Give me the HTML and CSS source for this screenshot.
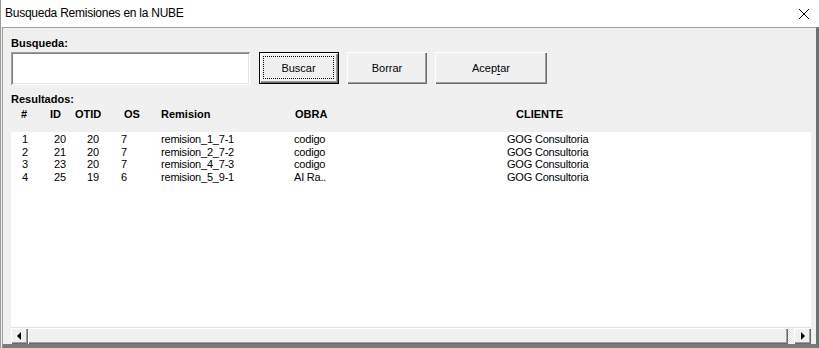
FILE: index.html
```html
<!DOCTYPE html>
<html lang="es">
<head>
  <meta charset="UTF-8" />
  <meta name="viewport" content="width=device-width, initial-scale=1.0"/>
  <title>Busqueda Remisiones en la NUBE</title>
  <link rel="stylesheet" href="styles.css">
</head>
<body>

  <div class="window">
    <div class="titlebar">
      <span class="title">Busqueda Remisiones en la NUBE</span>
      <svg class="close" width="12" height="12" viewBox="0 0 12 12">
        <path d="M1 1 L11 11 M11 1 L1 11" stroke="#000" stroke-width="1" fill="none"/>
      </svg>
    </div>

    <div class="client">
      <div class="label">Busqueda:</div>
      <div class="search-row">
        <input type="text" class="search-box" />
        <button class="btn default"><span class="focus">Buscar</span></button>
        <button class="btn">Borrar</button>
        <button class="btn wide">Acep<u>t</u>ar</button>
      </div>

      <div class="label results">Resultados:</div>
      <div class="cols head">
        <span>#</span><span>ID</span><span>OTID</span><span>OS</span><span>Remision</span><span>OBRA</span><span>CLIENTE</span>
      </div>

      <div class="listbox">
        <div class="rows" id="rows"></div>
        <div class="hscroll">
          <div class="sb-btn"><span class="arrow left"></span></div>
          <div class="thumb"></div>
          <div class="track"></div>
          <div class="sb-btn"><span class="arrow right"></span></div>
        </div>
      </div>
    </div>
  </div>

  <script>
    const remisiones = [
      { n: 1, id: 20, otid: 20, os: 7, remision: "remision_1_7-1", obra: "codigo", cliente: "GOG Consultoria" },
      { n: 2, id: 21, otid: 20, os: 7, remision: "remision_2_7-2", obra: "codigo", cliente: "GOG Consultoria" },
      { n: 3, id: 23, otid: 20, os: 7, remision: "remision_4_7-3", obra: "codigo", cliente: "GOG Consultoria" },
      { n: 4, id: 25, otid: 19, os: 6, remision: "remision_5_9-1", obra: "AI Ra..", cliente: "GOG Consultoria" },
    ];

    function renderRows() {
      const rows = document.getElementById("rows");
      remisiones.forEach(r => {
        const div = document.createElement("div");
        div.className = "cols row";
        div.innerHTML = `
          <span>${r.n}</span><span>${r.id}</span><span>${r.otid}</span><span>${r.os}</span>
          <span>${r.remision}</span><span>${r.obra}</span><span>${r.cliente}</span>
        `;
        rows.appendChild(div);
      });
    }

    renderRows();
  </script>

</body>
</html>
```

FILE: styles.css
```css
body {
  margin: 0;
  padding: 0;
  background: #f0f0f0;
  font-family: "Liberation Sans", Arial, sans-serif;
  font-size: 11px;
  color: #000;
}

.window {
  width: 819px;
  height: 348px;
  box-sizing: border-box;
  border-left: 1px solid #9a9a9a;
  display: flex;
  flex-direction: column;
  overflow: hidden;
}

.titlebar {
  height: 27px;
  background: #fff;
  display: flex;
  align-items: center;
  justify-content: space-between;
  padding: 0 9px 0 4px;
  flex-shrink: 0;
}

.title {
  font-size: 12px;
  letter-spacing: -0.25px;
  margin-top: -1px;
}

.close {
  display: block;
  margin-top: 1px;
}

.client {
  flex: 1;
  margin-left: 1px;
  background: #f0f0f0;
  border-top: 1px solid #a0a0a0;
  border-left: 1px solid #a0a0a0;
  border-right: 3px solid #6f6f6f;
  border-bottom: 4px solid #7b7b7b;
  padding: 9px 0 0 8px;
  display: flex;
  flex-direction: column;
}

.label {
  font-weight: bold;
  line-height: 13px;
  height: 13px;
}

.search-row {
  display: flex;
  align-items: flex-start;
  margin-top: 2px;
  height: 33px;
}

.search-box {
  width: 239px;
  height: 33px;
  box-sizing: border-box;
  margin: 0 9px 0 0;
  padding: 0;
  border: none;
  background: #fff;
  box-shadow: inset 1px 1px #a0a0a0, inset -1px -1px #fff, inset 2px 2px #808080, inset -2px -2px #e3e3e3;
  outline: none;
}

.btn {
  width: 80px;
  height: 32px;
  box-sizing: border-box;
  margin: 0 8px 0 0;
  padding: 0;
  border: none;
  background: #f0f0f0;
  font-family: "Liberation Sans", Arial, sans-serif;
  font-size: 11px;
  color: #000;
  box-shadow: inset 1px 1px #fff, inset -1px -1px #696969, inset -2px -2px #a0a0a0;
  display: flex;
  align-items: center;
  justify-content: center;
}

.btn.wide {
  width: 112px;
}

.btn.default {
  border: 1px solid #000;
}

.btn .focus {
  flex: 1;
  align-self: stretch;
  margin: 3px 4px 4px 3px;
  border: 1px dotted #000;
  display: flex;
  align-items: center;
  justify-content: center;
}

.btn u {
  text-underline-offset: 2px;
}

.results {
  margin-top: 8px;
}

.cols {
  display: grid;
  line-height: 13px;
}

.head {
  margin-top: 2px;
  height: 24px;
  font-weight: bold;
  padding-left: 10px;
  grid-template-columns: 29px 25px 49px 37px 134px 221px auto;
  align-content: start;
}

.listbox {
  width: 800px;
  height: 212px;
  background: #fff;
  display: flex;
  flex-direction: column;
}

.rows {
  flex: 1;
  padding-top: 1px;
}

.row {
  line-height: 12.5px;
  padding-left: 11px;
  letter-spacing: -0.2px;
  grid-template-columns: 32px 33px 34px 40px 133px 213px auto;
}

.hscroll {
  height: 17px;
  display: flex;
  background: #f0f0f0;
  border-top: 1px solid #e3e3e3;
  box-sizing: border-box;
}

.sb-btn, .thumb {
  box-sizing: border-box;
  background: #f0f0f0;
  box-shadow: inset 1px 1px #fff, inset -1px -1px #696969, inset -2px -2px #a0a0a0;
}

.sb-btn {
  width: 17px;
  display: flex;
  align-items: center;
  justify-content: center;
}

.thumb {
  flex: 1;
}

.track {
  width: 6px;
  background: repeating-conic-gradient(#fff 0 25%, #e0e0e0 0 50%) 0 0 / 2px 2px;
}

.arrow {
  width: 0;
  height: 0;
  border-top: 4px solid transparent;
  border-bottom: 4px solid transparent;
}

.arrow.left {
  border-right: 4px solid #000;
  margin-left: -1px;
}

.arrow.right {
  border-left: 4px solid #000;
  margin-left: 1px;
}
```
